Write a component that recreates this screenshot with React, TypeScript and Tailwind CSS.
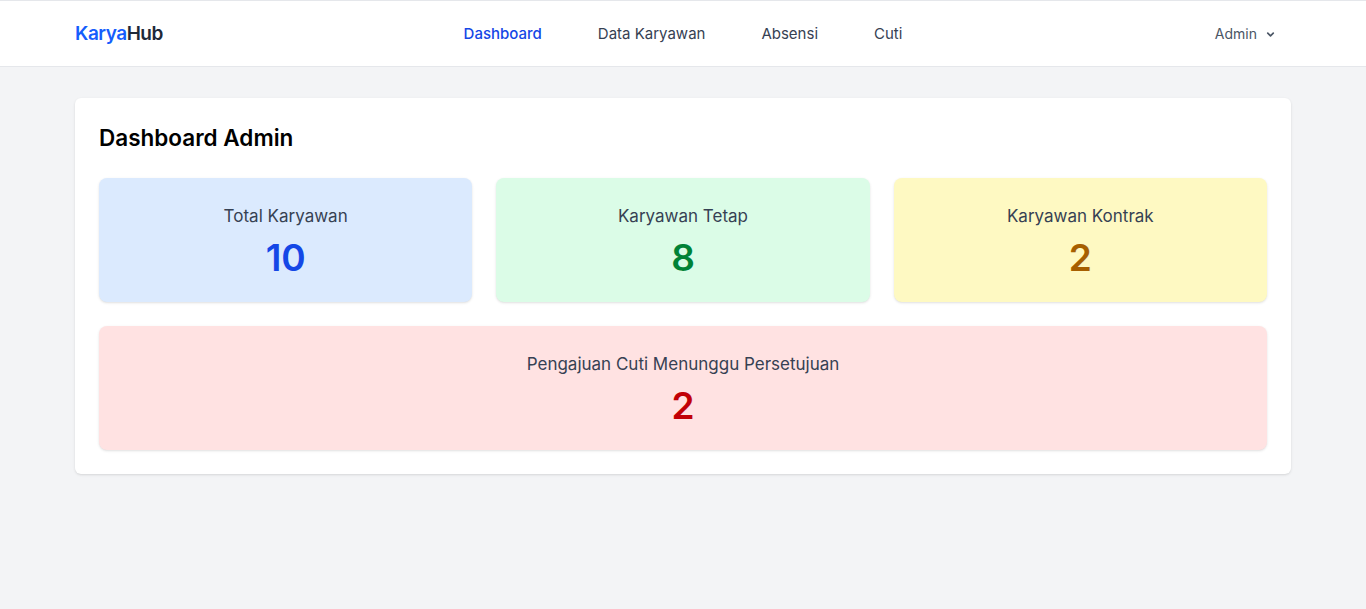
import React from "react";

const font = { fontFamily: "Inter, 'Noto Sans', sans-serif" };

function Stat({ label, value, bg, color }: { label: string; value: string; bg: string; color: string }) {
  return (
    <div className={`rounded-lg p-6 text-center shadow-sm ${bg}`}>
      <div className="text-[17px] leading-7 text-gray-700">{label}</div>
      <div className={`mt-2 text-[37px] leading-10 font-semibold ${color}`}>{value}</div>
    </div>
  );
}

export default function App() {
  return (
    <div className="min-h-screen bg-gray-100 border-t border-gray-200" style={font}>
      <nav className="bg-white border-b border-gray-200">
        <div className="mx-auto max-w-7xl px-8 h-[65px] pt-px grid grid-cols-[1fr_auto_1fr] items-center">
          <div className="text-[19px] font-semibold tracking-tight">
            <span className="text-blue-600">Karya</span>
            <span className="text-gray-800">Hub</span>
          </div>
          <div className="flex items-center gap-14 text-[15px] text-gray-700">
            <span className="text-blue-700 font-medium">Dashboard</span>
            <span>Data Karyawan</span>
            <span>Absensi</span>
            <span>Cuti</span>
          </div>
          <div className="flex justify-end pr-[15px]">
            <button className="flex items-center gap-2 text-sm text-gray-600">
              Admin
              <svg width="11" height="11" viewBox="0 0 12 12" fill="none" stroke="currentColor" strokeWidth="1.8" strokeLinecap="round" strokeLinejoin="round">
                <path d="M3 4.5l3 3 3-3" />
              </svg>
            </button>
          </div>
        </div>
      </nav>
      <main className="mx-auto max-w-7xl px-8 pt-[31px] pb-8">
        <div className="rounded-md bg-white p-6 shadow-sm">
          <h1 className="text-[22.5px] leading-8 font-semibold text-black">Dashboard Admin</h1>
          <div className="mt-6 grid grid-cols-3 gap-6">
            <Stat label="Total Karyawan" value="10" bg="bg-blue-100" color="text-blue-700" />
            <Stat label="Karyawan Tetap" value="8" bg="bg-green-100" color="text-green-700" />
            <Stat label="Karyawan Kontrak" value="2" bg="bg-yellow-100" color="text-yellow-700" />
          </div>
          <div className="mt-6">
            <Stat label="Pengajuan Cuti Menunggu Persetujuan" value="2" bg="bg-red-100" color="text-red-700" />
          </div>
        </div>
      </main>
    </div>
  );
}
